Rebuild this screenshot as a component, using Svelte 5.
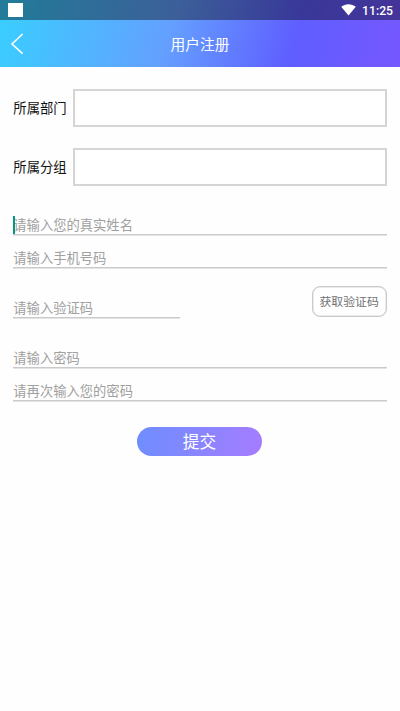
<script>
  const selects = ['所属部门', '所属分组'];
</script>

<div class="screen">
  <header>
    <div class="status">
      <span class="notice"></span>
      <div class="indicators">
        <svg width="15" height="12" viewBox="0 0 15 12"><path d="M.2 2.8C4.5-.6 10.5-.6 14.8 2.8L7.5 11.6Z" fill="#fff" /></svg>
        <span class="time">11:25</span>
      </div>
    </div>
    <div class="nav">
      <svg class="back" width="14" height="22" viewBox="0 0 14 22"><path d="M12.6 1L2 11L12.6 20.6" fill="none" stroke="#fff" stroke-width="1.6" /></svg>
      <h1>用户注册</h1>
    </div>
  </header>

  <main>
    {#each selects as label}
      <div class="select-row">
        <span class="label">{label}</span>
        <div class="box"></div>
      </div>
    {/each}

    <div class="field name"><span class="caret"></span><span>请输入您的真实姓名</span></div>
    <div class="field"><span>请输入手机号码</span></div>
    <div class="code-row">
      <div class="field"><span>请输入验证码</span></div>
      <button class="code">获取验证码</button>
    </div>
    <div class="field password"><span>请输入密码</span></div>
    <div class="field"><span>请再次输入您的密码</span></div>
    <button class="submit">提交</button>
  </main>
</div>

<style>
  :global(body) { margin: 0; background: #fefefe; }
  .screen {
    width: 400px;
    height: 711px;
    overflow: hidden;
    background: #fefefe;
    font-family: "Noto Sans CJK SC", sans-serif;
  }
  header {
    height: 67px;
    background: linear-gradient(106deg, #38cfff 0%, #64a0ff 42.5%, #5f5eff 73%, #7657ff 100%);
  }
  .status {
    height: 20px;
    box-sizing: border-box;
    padding: 0 7px 0 8px;
    display: flex;
    justify-content: space-between;
    align-items: center;
    background: rgba(0, 0, 0, 0.4);
  }
  .notice { width: 14.5px; height: 14px; background: #fff; }
  .indicators { display: flex; align-items: center; gap: 6px; }
  .indicators svg { display: block; }
  .time {
    font: 500 12.2px/20px Roboto, sans-serif;
    color: #fff;
    padding-top: 1px;
  }
  .nav {
    height: 47px;
    display: flex;
    align-items: center;
  }
  .back { margin-left: 10px; flex: none; }
  h1 {
    flex: 1;
    margin: 0 24px 0 0;
    text-align: center;
    font-size: 14.7px;
    line-height: 22px;
    font-weight: 400;
    color: #fff;
  }
  main {
    padding: 22px 13.4px 0 13.3px;
    display: flex;
    flex-direction: column;
  }
  .select-row {
    height: 38px;
    margin-bottom: 21.3px;
    display: flex;
    align-items: center;
  }
  .label { width: 59.9px; flex: none; font-size: 13.35px; line-height: 20px; color: #111; white-space: nowrap; }
  .box { flex: 1; height: 38px; box-sizing: border-box; border: 2px solid #d5d5d5; background: #fff; }
  .field {
    position: relative;
    height: 33.2px;
    box-sizing: border-box;
    flex: none;
    display: flex;
    align-items: flex-end;
    border-bottom: 1.5px solid #cacaca;
    box-shadow: 0 1px 0 #e4e4e4;
    font-size: 13.3px;
    line-height: 18px;
    color: #a0a0a0;
  }
  .name { margin-top: -6px; }
  .caret { position: absolute; left: 0; bottom: 0; width: 1.5px; height: 18px; background: #009688; }
  .code-row {
    height: 50px;
    display: flex;
    justify-content: space-between;
    align-items: flex-end;
  }
  .code-row .field { width: 167px; }
  .code {
    width: 75px;
    height: 31px;
    margin: 0 0 1px;
    padding: 0;
    box-sizing: border-box;
    border: 1.5px solid #cacaca;
    box-shadow: inset 0 0 0 0.5px #d8d8d8;
    border-radius: 8px;
    background: #fff;
    font: 400 11.9px/18px "Noto Sans CJK SC", sans-serif;
    color: #707070;
    white-space: nowrap;
  }
  .password { margin-top: 16.5px; }
  .submit {
    align-self: center;
    width: 125px;
    height: 29px;
    margin: 26px 1px 0 0;
    padding: 0;
    border: 0;
    border-radius: 15px;
    background: linear-gradient(105deg, #6d8eff, #a67cff);
    font: 400 16.7px/28px "Noto Sans CJK SC", sans-serif;
    color: #fff;
  }
</style>
